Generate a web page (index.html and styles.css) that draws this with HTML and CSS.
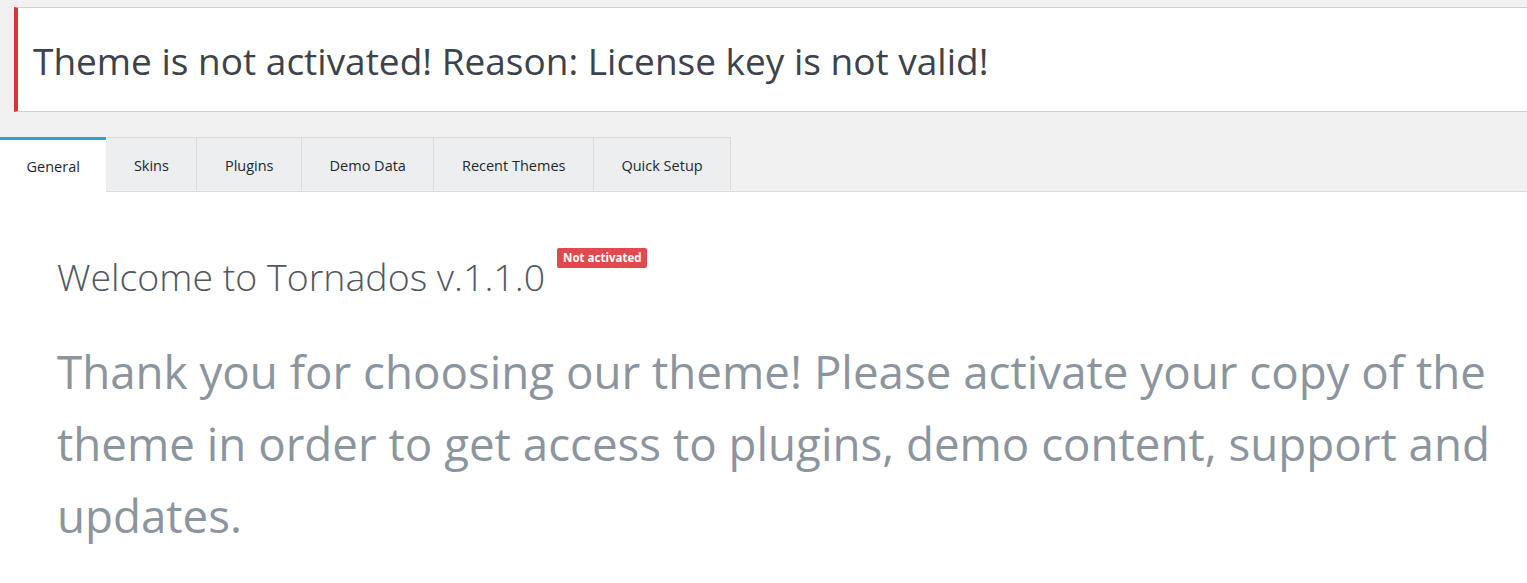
FILE: index.html
```html
<!DOCTYPE html>
<html lang="en">
<head>
<meta charset="utf-8">
<title>Theme Dashboard</title>
<link rel="stylesheet" href="styles.css">
</head>
<body>
<div class="notice">Theme is not activated! Reason: License key is not valid!</div>
<nav class="tabs">
  <a class="tab active">General</a>
  <a class="tab">Skins</a>
  <a class="tab">Plugins</a>
  <a class="tab">Demo Data</a>
  <a class="tab">Recent Themes</a>
  <a class="tab">Quick Setup</a>
</nav>
<main class="content">
  <h1 class="title">Welcome to Tornados v.1.1.0<span class="badge">Not activated</span></h1>
  <p class="lead">Thank you for choosing our theme! Please activate your copy of the theme in order to get access to plugins, demo content, support and updates.</p>
</main>
</body>
</html>
```
FILE: styles.css
```css
html, body {
  margin: 0;
  padding: 0;
}
body {
  background: #f1f1f1;
  font-family: "Open Sans", "Noto Sans", sans-serif;
  height: 583px;
  overflow: hidden;
  display: flex;
  flex-direction: column;
}
.notice {
  margin: 7px 0 0 14px;
  background: #fff;
  border-top: 1px solid #d0d0d0;
  border-bottom: 1px solid #d0d0d0;
  border-left: 4px solid #d63638;
  padding: 29px 0 26px 15px;
  font-size: 37px;
  line-height: 48px;
  color: #3c434a;
}
.tabs {
  display: flex;
  margin-top: 25px;
  border-bottom: 1px solid #dcdcde;
}
.tab {
  display: block;
  padding: 2px 27.5px 0;
  height: 50px;
  line-height: 52px;
  font-size: 14.5px;
  color: #23282d;
  background: #eceef0;
  border-top: 1px solid #dcdcde;
  border-right: 1px solid #dcdcde;
  margin-bottom: -1px;
}
.tab.active {
  background: #fff;
  border-top: 3px solid #2ea2cc;
  border-right: none;
  height: 51px;
  line-height: 53px;
  padding: 0 26.5px 1px;
}
.content {
  flex: 1;
  background: #fff;
  padding: 61px 30px 0 57px;
}
.title {
  margin: 0;
  font-weight: 300;
  font-size: 37.5px;
  line-height: 48px;
  color: #50575e;
}
.badge {
  display: inline-block;
  vertical-align: top;
  margin: 0 0 0 12px;
  position: relative;
  top: -5px;
  background: #e2494f;
  color: #fff;
  font-size: 11.5px;
  font-weight: 700;
  line-height: 20px;
  padding: 0 6px;
  border-radius: 2px;
}
.lead {
  margin: 34px 0 0;
  font-size: 45.7px;
  line-height: 72px;
  color: #8c959e;
}
```
